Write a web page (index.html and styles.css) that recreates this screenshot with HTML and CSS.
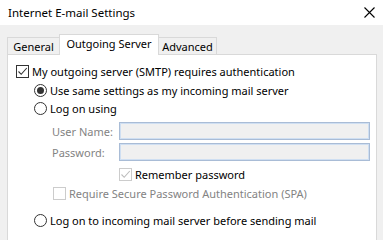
FILE: index.html
```html
<!DOCTYPE html>
<html>
<head>
<meta charset="utf-8">
<link rel="stylesheet" href="styles.css">
</head>
<body>
<div class="window">
  <div class="titlebar">
    <span class="title">Internet E-mail Settings</span>
    <svg class="close" width="11" height="11" viewBox="0 0 11 11"><path d="M0.5 0.5L10.5 10.5M10.5 0.5L0.5 10.5" stroke="#000" stroke-width="1.1" fill="none"/></svg>
  </div>
  <div class="tabs">
    <div class="tab tab-general">General</div>
    <div class="tab tab-active">Outgoing Server</div>
    <div class="tab tab-advanced">Advanced</div>
  </div>
  <div class="panel">
    <div class="row r1">
      <span class="check"><svg width="11" height="11" viewBox="0 0 11 11"><path d="M1.5 5.5L4.2 8.3L9.8 2" stroke="#333" stroke-width="1.1" fill="none"/></svg></span>
      <span class="lbl">My outgoing server (SMTP) requires authentication</span>
    </div>
    <div class="row r2 ind1">
      <span class="radio on"></span>
      <span class="lbl">Use same settings as my incoming mail server</span>
    </div>
    <div class="row r3 ind1">
      <span class="radio"></span>
      <span class="lbl">Log on using</span>
    </div>
    <div class="row r4 ind2">
      <span class="field-lbl">User Name:</span>
      <span class="input"></span>
    </div>
    <div class="row r5 ind2">
      <span class="field-lbl">Password:</span>
      <span class="input"></span>
    </div>
    <div class="row r6 ind3">
      <span class="check dis"><svg width="11" height="11" viewBox="0 0 11 11"><path d="M1.5 5.5L4.2 8.3L9.8 2" stroke="#bcbcbc" stroke-width="1.1" fill="none"/></svg></span>
      <span class="lbl">Remember password</span>
    </div>
    <div class="row r7 ind4">
      <span class="check dis"></span>
      <span class="lbl gray">Require Secure Password Authentication (SPA)</span>
    </div>
    <div class="row r8 ind1">
      <span class="radio"></span>
      <span class="lbl">Log on to incoming mail server before sending mail</span>
    </div>
  </div>
</div>
</body>
</html>
```
FILE: styles.css
```css
html, body {
  margin: 0;
  padding: 0;
}
body {
  width: 383px;
  height: 240px;
  overflow: hidden;
  background: #f0f0f0;
  font-family: "Noto Sans", "Open Sans", sans-serif;
  font-size: 11px;
  color: #000;
}
.window {
  display: flex;
  flex-direction: column;
  height: 240px;
}
.titlebar {
  height: 25px;
  background: #fff;
  display: flex;
  align-items: center;
  justify-content: space-between;
  padding: 0 8px 0 8px;
}
.title {
  font-size: 11.5px;
}
.close {
  display: block;
}
.tabs {
  display: flex;
  align-items: flex-end;
  margin-top: 9px;
  padding-left: 7px;
  height: 20px;
  position: relative;
  z-index: 1;
}
.tab {
  box-sizing: border-box;
  height: 17px;
  border: 1px solid #d9d9d9;
  border-bottom: none;
  background: #f0f0f0;
  display: flex;
  align-items: center;
  justify-content: center;
  line-height: 1;
}
.tab-general {
  width: 52px;
  border-right: none;
}
.tab-active {
  width: 100px;
  height: 21px;
  background: #fff;
  margin-bottom: -1px;
  padding-bottom: 3px;
}
.tab-advanced {
  width: 58px;
  border-left: none;
}
.panel {
  flex: 1;
  margin-left: 7px;
  width: 370px;
  background: #fff;
  border: 1px solid #d9d9d9;
  border-bottom: none;
  box-sizing: border-box;
  display: flex;
  flex-direction: column;
  padding-left: 8px;
}
.row {
  height: 18px;
  display: flex;
  align-items: center;
}
.r1 { margin-top: 7px; }
.r2 { margin-top: 1px; }
.r3 { margin-top: 0; }
.r4 { margin-top: 5px; }
.r5 { margin-top: 3px; }
.r6 { margin-top: 4px; }
.r7 { margin-top: 1px; }
.r8 { margin-top: 9px; }
.ind1 { padding-left: 18px; }
.ind2 { padding-left: 36px; }
.ind3 { padding-left: 103px; }
.ind4 { padding-left: 37px; }
.check {
  box-sizing: border-box;
  width: 13px;
  height: 13px;
  border: 1px solid #333;
  background: #fff;
  display: flex;
  align-items: center;
  justify-content: center;
  margin-right: 3px;
  flex: none;
}
.check.dis {
  border-color: #cccccc;
}
.radio {
  box-sizing: border-box;
  width: 13px;
  height: 13px;
  border: 1px solid #333;
  border-radius: 50%;
  background: #fff;
  margin-right: 3px;
  flex: none;
  display: flex;
  align-items: center;
  justify-content: center;
}
.radio.on::after {
  content: "";
  width: 7px;
  height: 7px;
  border-radius: 50%;
  background: #333;
}
.lbl {
  white-space: nowrap;
}
.gray {
  color: #838383;
}
.field-lbl {
  width: 67px;
  color: #838383;
  flex: none;
}
.input {
  box-sizing: border-box;
  width: 251px;
  height: 18px;
  background: #f0f0f0;
  border: 1px solid #a9bcd6;
  box-shadow: inset 0 0 0 1px #cfdff2;
}
```
